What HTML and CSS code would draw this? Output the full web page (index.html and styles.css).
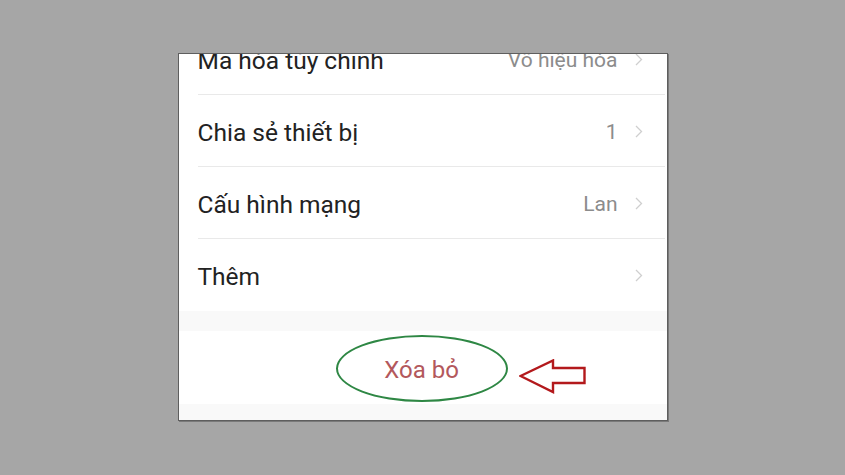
FILE: index.html
```html
<!DOCTYPE html>
<html lang="vi">
<head>
<meta charset="utf-8">
<title>Cài đặt</title>
<link rel="stylesheet" href="styles.css">
</head>
<body>
<div class="stage">
  <div class="panel">
    <ul class="list">
      <li class="row">
        <span class="label">Mã hóa tùy chỉnh</span>
        <span class="value">Vô hiệu hóa</span>
        <svg class="chev" width="8" height="13" viewBox="0 0 8 13"><polyline points="1,1 6.5,6.5 1,12" fill="none" stroke="#cfcfcf" stroke-width="1.3"/></svg>
      </li>
      <li class="row">
        <span class="label">Chia sẻ thiết bị</span>
        <span class="value">1</span>
        <svg class="chev" width="8" height="13" viewBox="0 0 8 13"><polyline points="1,1 6.5,6.5 1,12" fill="none" stroke="#cfcfcf" stroke-width="1.3"/></svg>
      </li>
      <li class="row">
        <span class="label">Cấu hình mạng</span>
        <span class="value">Lan</span>
        <svg class="chev" width="8" height="13" viewBox="0 0 8 13"><polyline points="1,1 6.5,6.5 1,12" fill="none" stroke="#cfcfcf" stroke-width="1.3"/></svg>
      </li>
      <li class="row last">
        <span class="label">Thêm</span>
        <span class="value"></span>
        <svg class="chev" width="8" height="13" viewBox="0 0 8 13"><polyline points="1,1 6.5,6.5 1,12" fill="none" stroke="#cfcfcf" stroke-width="1.3"/></svg>
      </li>
    </ul>
    <div class="gap"></div>
    <div class="action">
      <span class="delete">Xóa bỏ</span>
      <span class="ring"></span>
      <svg class="arrow" width="68" height="36" viewBox="0 0 68 36">
        <path d="M1.5 17 L34 1.5 L34 9 L65.5 9 L65.5 24 L34 24 L34 33 Z" fill="none" stroke="#b3191c" stroke-width="2.4" stroke-linejoin="miter"/>
      </svg>
    </div>
    <div class="bottom"></div>
  </div>
</div>
</body>
</html>
```

FILE: styles.css
```css
html, body {
  margin: 0;
  padding: 0;
}
body {
  background: #a6a6a6;
  font-family: Roboto, "Noto Sans", "DejaVu Sans", sans-serif;
}
.stage {
  width: 845px;
  height: 475px;
  display: flex;
  align-items: center;
  justify-content: center;
}
.panel {
  width: 490px;
  height: 368px;
  box-sizing: border-box;
  background: #ffffff;
  border: 1px solid #5e5e5e;
  box-shadow: 1px 1px 0 #7a7a7a;
  overflow: hidden;
  display: flex;
  flex-direction: column;
  margin-top: -1px;
}
.list {
  list-style: none;
  margin: -31px 2px 0 19px;
  padding: 0;
}
.row {
  height: 72px;
  box-sizing: border-box;
  border-bottom: 1px solid #e9e9e9;
  display: flex;
  align-items: center;
  padding: 3px 22px 0 0;
}
.row.last {
  border-bottom: none;
}
.label {
  flex: 1;
  font-size: 24.5px;
  color: #222222;
}
.value {
  font-size: 21px;
  color: #8c8c8c;
  margin-right: 17px;
}
.chev {
  display: block;
  margin-top: -2px;
}
.gap {
  height: 20px;
  background: #f9f9f9;
}
.action {
  position: relative;
  height: 73px;
  display: flex;
  align-items: center;
  justify-content: center;
  background: #ffffff;
}
.delete {
  font-size: 24px;
  color: #b3585c;
  margin-top: 4px;
  margin-right: 2px;
}
.ring {
  position: absolute;
  left: 157px;
  top: 4px;
  width: 172px;
  height: 67px;
  box-sizing: border-box;
  border: 2.5px solid #2e8744;
  border-radius: 50%;
}
.arrow {
  position: absolute;
  left: 340px;
  top: 28px;
}
.bottom {
  flex: 1;
  background: #f9f9f9;
}
```
